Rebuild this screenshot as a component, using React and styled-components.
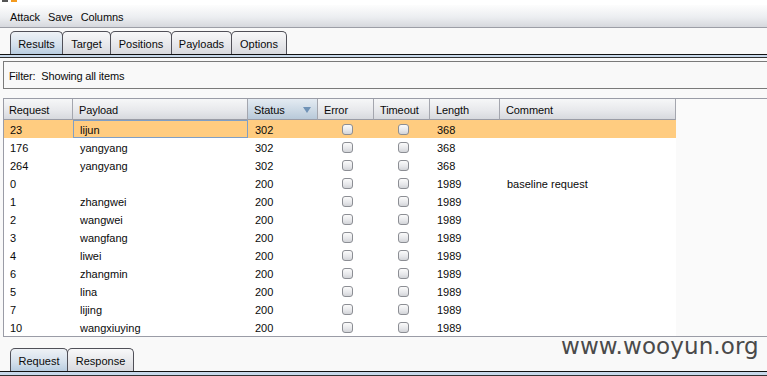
import React from 'react';
import styled, { createGlobalStyle } from 'styled-components';

const GlobalStyle = createGlobalStyle`
  html, body {
    margin: 0;
    padding: 0;
    background: #f9f9f9;
    overflow: hidden;
  }
  * { box-sizing: border-box; }
`;

const Window = styled.div`
  position: relative;
  width: 767px;
  height: 376px;
  overflow: hidden;
  display: flex;
  flex-direction: column;
  font-family: "Liberation Sans", Arial, sans-serif;
  font-size: 11px;
  color: #0a0a0a;
  background: #f9f9f9;
`;

const TopStrip = styled.div`
  height: 5px;
  background: #ffffff;
  display: flex;
  gap: 3px;
  padding-left: 2px;
`;

const Swatch = styled.span`
  width: 6px;
  height: 2px;
  background: ${p => p.$color};
`;

const MenuBar = styled.div`
  height: 23px;
  display: flex;
  align-items: center;
  gap: 8px;
  padding: 2px 0 0 10px;
  background: linear-gradient(#fdfdfd, #eceef1 55%, #d6d8dd);
  border-bottom: 1px solid #9c9ea6;
`;

const MenuItem = styled.span`
  letter-spacing: -0.1px;
`;

const TabRow = styled.div`
  display: flex;
  align-items: flex-end;
  padding: 3px 0 0 10px;
  height: ${p => p.$height}px;
`;

const Tab = styled.div`
  height: 23px;
  width: ${p => p.$w}px;
  display: flex;
  align-items: center;
  justify-content: center;
  padding-top: 2px;
  border: 1px solid #505058;
  border-bottom: none;
  border-radius: 5px 5px 0 0;
  margin-right: -1px;
  background: ${p => p.$active
    ? 'linear-gradient(#eef2f6, #d4e0ec 60%, #b9cde0)'
    : 'linear-gradient(#f8f8f9, #e6e7ea 60%, #d9dadf)'};
  position: relative;
  z-index: ${p => (p.$active ? 2 : 1)};
`;

const TabRule = styled.div`
  height: 5px;
  border-top: 1px solid #111;
  border-bottom: 1px solid #333;
  background: #c8d9eb;
`;

const FilterBox = styled.div`
  margin: 3px 0 0 3px;
  height: 28px;
  border: 1px solid #7a7a7a;
  border-right: none;
  display: flex;
  align-items: center;
  padding: 2px 0 0 5px;
  background: #f9f9f9;
  letter-spacing: -0.15px;
  white-space: pre;
`;

const ScrollPane = styled.div`
  margin: 9px 0 0 3px;
  height: 240px;
  border-top: 1px solid #9a9ca6;
  border-bottom: 1px solid #9a9ca6;
  border-left: 1px solid #9a9ca6;
  background: #fafafa;
  display: flex;
  flex-direction: column;
`;

const cols = '69px 175px 70px 56px 56px 70px 176px';

const HeaderRow = styled.div`
  display: grid;
  grid-template-columns: ${cols};
  width: 672px;
  height: 21px;
`;

const HeadCell = styled.div`
  position: relative;
  display: flex;
  align-items: center;
  padding: 2px 0 0 ${p => (p.$first ? 5 : 6)}px;
  border-right: 1px solid #a4a6ae;
  border-bottom: 1px solid #9a9ca6;
  letter-spacing: -0.1px;
  background: ${p => p.$sorted
    ? 'linear-gradient(#e4ebf2, #ccd9e5 55%, #b8c9d9)'
    : 'linear-gradient(#f6f7f8, #e8e9ec 55%, #d7d9de)'};
`;

const SortArrow = styled.span`
  position: absolute;
  right: 6px;
  top: 8px;
  width: 0;
  height: 0;
  border-left: 4px solid transparent;
  border-right: 4px solid transparent;
  border-top: 6px solid #6f92b6;
`;

const Row = styled.div`
  display: grid;
  grid-template-columns: ${cols};
  width: 672px;
  height: 18px;
  background: ${p => (p.$selected ? '#ffcc80' : '#ffffff')};
`;

const Cell = styled.div`
  display: flex;
  align-items: center;
  padding: 2px 0 0 ${p => (p.$first ? 5 : 6)}px;
  justify-content: ${p => (p.$center ? 'center' : 'flex-start')};
  border: 1px solid ${p => (p.$focus ? '#7f9fc6' : 'transparent')};
  ${p => p.$center && 'padding: 1px 0 0 2px;'}
`;

const Check = styled.span`
  width: 11px;
  height: 11px;
  border: 1px solid #8c8e94;
  border-radius: 3px;
  background: linear-gradient(#fbfbfb, #e6e7ea 60%, #d2d4d8);
`;

const BottomTabs = styled.div`
  margin-top: 10px;
`;

const Watermark = styled.div`
  position: absolute;
  left: 561px;
  top: 333px;
  font-family: "DejaVu Sans", Verdana, sans-serif;
  font-size: 23px;
  color: #4a4a4a;
  letter-spacing: 0.1px;
`;

const rows = [
  ['23', 'lijun', '302', '368', ''],
  ['176', 'yangyang', '302', '368', ''],
  ['264', 'yangyang', '302', '368', ''],
  ['0', '', '200', '1989', 'baseline request'],
  ['1', 'zhangwei', '200', '1989', ''],
  ['2', 'wangwei', '200', '1989', ''],
  ['3', 'wangfang', '200', '1989', ''],
  ['4', 'liwei', '200', '1989', ''],
  ['6', 'zhangmin', '200', '1989', ''],
  ['5', 'lina', '200', '1989', ''],
  ['7', 'lijing', '200', '1989', ''],
  ['10', 'wangxiuying', '200', '1989', ''],
];

const topTabs = [['Results', 53], ['Target', 49], ['Positions', 62], ['Payloads', 61], ['Options', 56]];

export default function App() {
  return (
    <Window>
      <GlobalStyle />
      <TopStrip>
        <Swatch $color="#555" />
        <Swatch $color="#f39a1e" />
      </TopStrip>
      <MenuBar>
        <MenuItem>Attack</MenuItem>
        <MenuItem>Save</MenuItem>
        <MenuItem>Columns</MenuItem>
      </MenuBar>
      <TabRow $height={26}>
        {topTabs.map(([t, w], i) => (
          <Tab key={t} $active={i === 0} $w={w}>{t}</Tab>
        ))}
      </TabRow>
      <TabRule />
      <FilterBox>Filter:  Showing all items</FilterBox>
      <ScrollPane>
        <HeaderRow>
          <HeadCell $first>Request</HeadCell>
          <HeadCell>Payload</HeadCell>
          <HeadCell $sorted>Status<SortArrow /></HeadCell>
          <HeadCell>Error</HeadCell>
          <HeadCell>Timeout</HeadCell>
          <HeadCell>Length</HeadCell>
          <HeadCell>Comment</HeadCell>
        </HeaderRow>
        {rows.map((r, i) => (
          <Row key={i} $selected={i === 0}>
            <Cell $first>{r[0]}</Cell>
            <Cell $focus={i === 0}>{r[1]}</Cell>
            <Cell>{r[2]}</Cell>
            <Cell $center><Check /></Cell>
            <Cell $center><Check /></Cell>
            <Cell>{r[3]}</Cell>
            <Cell>{r[4]}</Cell>
          </Row>
        ))}
      </ScrollPane>
      <BottomTabs>
        <TabRow $height={24}>
          <Tab $active $w={58}>Request</Tab>
          <Tab $w={67}>Response</Tab>
        </TabRow>
        <TabRule />
      </BottomTabs>
      <Watermark>www.wooyun.org</Watermark>
    </Window>
  );
}
